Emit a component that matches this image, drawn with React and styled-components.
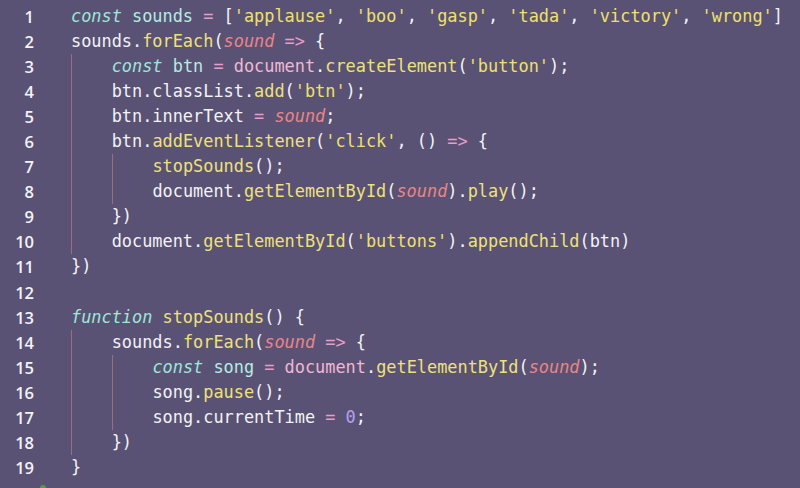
import React from "react";
import styled, { createGlobalStyle } from "styled-components";

const Global = createGlobalStyle`
  html, body { margin: 0; padding: 0; background: #595274; }
  body { width: 800px; height: 488px; overflow: hidden; }
`;

const Editor = styled.div`
  position: relative;
  width: 800px;
  height: 488px;
  background: #595274;
  padding-top: 3.5px;
  box-sizing: border-box;
  overflow: hidden;
`;

const Line = styled.div`
  display: flex;
  align-items: stretch;
  height: 25.1px;
`;

const Num = styled.div`
  width: 34px;
  flex: none;
  text-align: right;
  font-family: "Open Sans", "DejaVu Sans", sans-serif;
  font-weight: 600;
  font-size: 16.5px;
  line-height: 25.1px;
  color: #f4f2f6;
`;

const Code = styled.div`
  display: flex;
  margin-left: 37px;
  font-family: "DejaVu Sans Mono", monospace;
  font-size: 16.9px;
  line-height: 25.1px;
  white-space: pre;
  color: #f3f2f5;
`;

const Indent = styled.span`
  display: block;
  width: 40.7px;
  flex: none;
  box-shadow: ${(p) => (p.$guide ? "inset 1px 0 0 #9a6e82" : "none")};
`;

const colors = {
  p: "#f3f2f5",
  k: "#9fe7d9",
  v: "#b6ece2",
  o: "#e79cc9",
  d: "#f3b7d3",
  s: "#efe06c",
  f: "#efe17a",
  a: "#ea8686",
  n: "#b6a0ee",
};

const Tok = styled.span`
  color: ${(p) => colors[p.$t]};
  font-style: ${(p) => (p.$t === "k" || p.$t === "a" ? "italic" : "normal")};
`;

const Marker = styled.div`
  position: absolute;
  left: 40px;
  top: 485px;
  width: 6px;
  height: 6px;
  border-radius: 50%;
  background: #5a9a3c;
`;

const lines = [
  [0, 0, [["k", "const"], ["v", " sounds "], ["o", "="], ["p", " ["], ["s", "'applause'"], ["p", ", "], ["s", "'boo'"], ["p", ", "], ["s", "'gasp'"], ["p", ", "], ["s", "'tada'"], ["p", ", "], ["s", "'victory'"], ["p", ", "], ["s", "'wrong'"], ["p", "]"]]],
  [0, 0, [["p", "sounds."], ["f", "forEach"], ["p", "("], ["a", "sound"], ["o", " => "], ["p", "{"]]],
  [1, 1, [["k", "const"], ["v", " btn "], ["o", "="], ["d", " document"], ["p", "."], ["f", "createElement"], ["p", "("], ["s", "'button'"], ["p", ");"]]],
  [1, 1, [["p", "btn.classList."], ["f", "add"], ["p", "("], ["s", "'btn'"], ["p", ");"]]],
  [1, 1, [["p", "btn.innerText "], ["o", "="], ["p", " "], ["a", "sound"], ["p", ";"]]],
  [1, 1, [["p", "btn."], ["f", "addEventListener"], ["p", "("], ["s", "'click'"], ["p", ", () "], ["o", "=>"], ["p", " {"]]],
  [2, 2, [["f", "stopSounds"], ["p", "();"]]],
  [2, 2, [["p", "document."], ["f", "getElementById"], ["p", "("], ["a", "sound"], ["p", ")."], ["f", "play"], ["p", "();"]]],
  [1, 1, [["p", "})"]]],
  [1, 1, [["p", "document."], ["f", "getElementById"], ["p", "("], ["s", "'buttons'"], ["p", ")."], ["f", "appendChild"], ["p", "(btn)"]]],
  [0, 0, [["p", "})"]]],
  [0, 0, []],
  [0, 0, [["k", "function"], ["p", " "], ["f", "stopSounds"], ["p", "() {"]]],
  [1, 1, [["p", "sounds."], ["f", "forEach"], ["p", "("], ["a", "sound"], ["o", " => "], ["p", "{"]]],
  [2, 2, [["k", "const"], ["v", " song "], ["o", "="], ["d", " document"], ["p", "."], ["f", "getElementById"], ["p", "("], ["a", "sound"], ["p", ");"]]],
  [2, 2, [["p", "song."], ["f", "pause"], ["p", "();"]]],
  [2, 2, [["p", "song.currentTime "], ["o", "="], ["p", " "], ["n", "0"], ["p", ";"]]],
  [1, 1, [["p", "})"]]],
  [0, 0, [["p", "}"]]],
];

export default function App() {
  return (
    <>
      <Global />
      <Editor>
        {lines.map(([indent, guides, toks], i) => (
          <Line key={i}>
            <Num>{i + 1}</Num>
            <Code>
              {Array.from({ length: indent }).map((_, j) => (
                <Indent key={j} $guide={j < guides} />
              ))}
              <span>
                {toks.map(([t, s], k) => (
                  <Tok key={k} $t={t}>
                    {s}
                  </Tok>
                ))}
              </span>
            </Code>
          </Line>
        ))}
        <Marker />
      </Editor>
    </>
  );
}
